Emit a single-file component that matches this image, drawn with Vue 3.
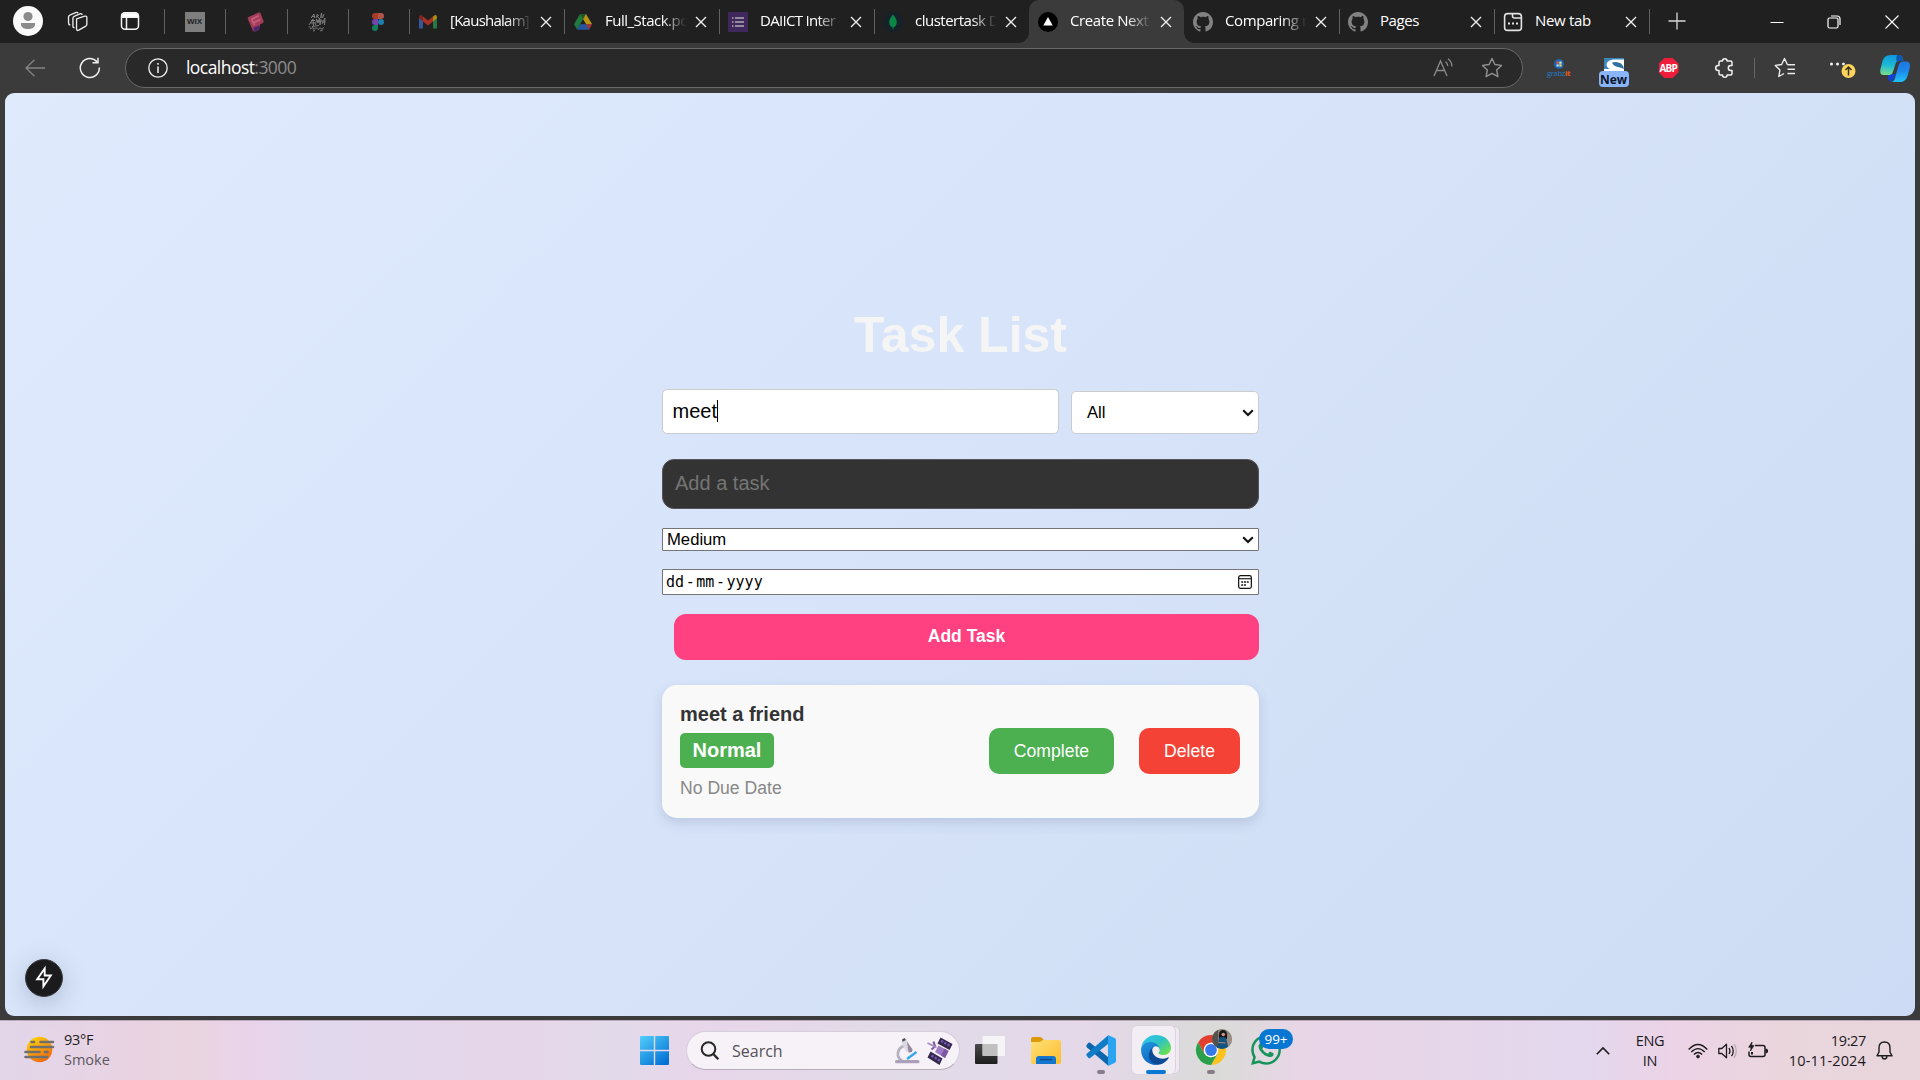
<script setup>
const pinned = ['wix', 'brand', 'ink', 'figma']
const tabs = [
  { icon: 'gmail', title: '[Kaushalam]' },
  { icon: 'drive', title: 'Full_Stack.pd' },
  { icon: 'forms', title: 'DAIICT Inter' },
  { icon: 'mongo', title: 'clustertask D' },
  { icon: 'next', title: 'Create Next', active: true },
  { icon: 'github', title: 'Comparing r' },
  { icon: 'github', title: 'Pages' },
  { icon: 'newtab', title: 'New tab' }
]
const tightness = {
  gmail: '-0.75px', drive: '-0.5px', forms: '-0.7px', mongo: '-0.5px',
  next: '-0.4px', github: '-0.4px', newtab: '-0.3px'
}
</script>

<template>
  <div class="screen">
    <header class="tabbar">
      <div class="cell c-user">
        <svg width="30" height="30" viewBox="0 0 30 30"><circle cx="15" cy="15" r="15" fill="#fafafa"/><circle cx="15" cy="10.5" r="4.6" fill="#8b8b8b"/><path d="M8 17h14v1.500c0 3-3.500 4.600-7 4.600s-7-1.600-7-4.600z" fill="#8b8b8b"/></svg>
      </div>
      <div class="cell c-work">
        <svg width="21" height="21" viewBox="0 0 22 22" fill="none" stroke="#ececec" stroke-width="1.400" stroke-linejoin="round"><path d="M10 8.200l8.500-2.800q2.300-.5 2.300 1.500v7q0 1.500-1.500 2.200l-7 4q-2 .9-2.300-1z"/><path d="M8 17.500q-2 0-1.800-2V7.500q.2-1.600 1.800-2.200L13.500 3q2-.7 2.500 1"/><path d="M3.500 14.800Q1.400 14 1.600 12V6.200Q1.800 4.600 3.500 4L9 1.700q2-.7 2.600.7"/></svg>
      </div>
      <div class="cell c-acts">
        <svg width="20" height="20" viewBox="0 0 20 20" fill="none" stroke="#f3f3f3" stroke-width="1.500"><rect x="1.500" y="1.800" width="17" height="16.500" rx="3.500"/><path d="M2 3.200q1-1 2.500-1h11q1.700 0 2.500 1v3H2z" fill="#fff"/><path d="M6.500 6v12"/></svg>
      </div>

      <div v-for="p in pinned" :key="p" class="pin">
        <div v-if="p === 'wix'" class="wix">WIX</div>
        <svg v-else-if="p === 'brand'" width="18" height="20" viewBox="0 0 18 20"><path d="M1.500 5L11.500.500q1.500-.5 2.200 1l2.800 7.500q.4 1.500-1 2.300L13 12.600l-1 4.900q-3.500 3-6 1.500L1 7.500Q.3 5.800 1.500 5z" fill="#a43c59"/><path d="M4.500 7.200l7.300-3.400M6.500 10.800l7-3.300M4.500 7.200l3 6" fill="none" stroke="#c4607e" stroke-width="1.800"/><path d="M6.500 15.500l6-2-.8 4q-3 2.500-5 1.200z" fill="#4b2476"/></svg>
        <svg v-else-if="p === 'ink'" width="20" height="20" viewBox="0 0 20 20" fill="none" stroke="#858585" stroke-width=".9"><path d="M4 6l3-4 .5 4M5 4.500h3M9 6l1.500-4M12 3l-2 1.500L12 6M13.500 6l1-5 .5 5M17 2l-1.500 4M2 13l4-6 .5 7M3.500 11H8M8.500 13l1-6 1.500 4 1.500-5 .5 7M14 7l-1 6M15 12l3-6-.5 7M15 10h3.500M3 17l3-1.500 1 2 2-2 2 2 2-1.500 2 1 2-1.500M4 8.500h4M10 9h6M5 14.500l7-1M6 19l2-.5M13 19l3-1M1.500 15h2"/></svg>
        <svg v-else width="14" height="20" viewBox="0 0 14 20"><path d="M4 1h3v6H4a3 3 0 010-6z" fill="#a73c27"/><path d="M7 1h3a3 3 0 010 6H7z" fill="#b05548"/><path d="M4 7h3v6H4a3 3 0 010-6z" fill="#7444ad"/><circle cx="10" cy="10" r="3" fill="#1c7fad"/><path d="M4 13h3v3a3 3 0 11-3-3z" fill="#12805b"/></svg>
      </div>

      <div v-for="(t, i) in tabs" :key="i" class="tab" :class="{ active: t.active, plain: i === 5 }">
        <span class="fav">
          <svg v-if="t.icon === 'gmail'" width="20" height="20" viewBox="0 0 20 20"><path d="M1 5v11.500h4V8z" fill="#34579c"/><path d="M19 5v11.500h-4V8z" fill="#267840"/><path d="M5 4.500l5 4 5-4v5L10 13.500 5 9.500z" fill="#a93228"/><path d="M1 6V5q.2-2.500 2.500-1.800L5 4.500v5z" fill="#7f2620"/><path d="M19 6V5q-.2-2.500-2.500-1.800L15 4.500v5z" fill="#b08b11"/></svg>
          <svg v-else-if="t.icon === 'drive'" width="20" height="20" viewBox="0 0 20 20"><path d="M7 2l3 5.200-6 10.300L1 12.200z" fill="#1f7a3d"/><path d="M7 2h6l6 10h-6z" fill="#b99414"/><path d="M4 17.800l3-5.600h12l-3 5.600z" fill="#28549b"/><path d="M13 12h6l-3 5.500z" fill="#a1352c"/><path d="M7 2h6l-3 5.200z" fill="#18582b"/></svg>
          <svg v-else-if="t.icon === 'forms'" width="20" height="20" viewBox="0 0 20 20"><rect width="20" height="20" rx="1" fill="#40285f"/><path d="M7 6h9M7 10h9M7 14h9M4 6h1.500M4 10h1.500M4 14h1.500" stroke="#918b9b" stroke-width="2"/></svg>
          <svg v-else-if="t.icon === 'mongo'" width="20" height="20" viewBox="0 0 20 20"><circle cx="10" cy="10" r="10" fill="#152229"/><path d="M10 2.500C7 6 6 8 6.300 11c.2 2 1.500 3.600 3.300 4.500l.2 2h.5l.2-2c1.800-1 3-2.500 3.200-4.500C14 8 13 6 10 2.500z" fill="#0c8645"/></svg>
          <svg v-else-if="t.icon === 'next'" width="20" height="20" viewBox="0 0 20 20"><circle cx="10" cy="10" r="10" fill="#000"/><path d="M10 5l4.700 8.500H5.300z" fill="#fff"/></svg>
          <svg v-else-if="t.icon === 'github'" width="20" height="20" viewBox="0 0 16 16"><path fill="#828282" d="M8 0C3.580 0 0 3.580 0 8c0 3.540 2.290 6.530 5.470 7.590.4.070.55-.17.55-.38 0-.19-.01-.82-.01-1.490-2.010.37-2.530-.49-2.690-.94-.09-.23-.48-.94-.82-1.130-.28-.15-.68-.52-.01-.53.63-.01 1.080.58 1.230.82.72 1.210 1.870.87 2.330.66.070-.52.28-.87.51-1.070-1.780-.2-3.640-.89-3.640-3.950 0-.87.31-1.590.82-2.150-.08-.2-.36-1.020.08-2.120 0 0 .67-.21 2.200.82.64-.18 1.320-.27 2-.27s1.360.09 2 .27c1.530-1.040 2.200-.82 2.200-.82.44 1.100.16 1.920.08 2.120.51.56.82 1.270.82 2.150 0 3.070-1.870 3.750-3.650 3.950.29.25.54.73.54 1.480 0 1.070-.01 1.930-.01 2.200 0 .21.15.46.55.38A8.010 8.010 0 0016 8c0-4.420-3.580-8-8-8z"/></svg>
          <svg v-else width="20" height="20" viewBox="0 0 20 20" fill="none" stroke="#e2e2e2" stroke-width="1.600"><rect x="1.600" y="1.600" width="16.800" height="16.800" rx="3"/><path d="M9.500 2v2q0 2 2 2h7"/><path d="M5 11.500h2m2 0h2m2 0h2" stroke-width="2"/></svg>
        </span>
        <span class="title" :class="{ fade: i < 6 }" :style="{ letterSpacing: tightness[t.icon] }">{{ t.title }}</span>
        <svg class="x" width="12" height="12" viewBox="0 0 12 12"><path d="M1 1l10 10M11 1L1 11" stroke="#eee" stroke-width="1.400"/></svg>
      </div>

      <div class="plus"><svg width="18" height="18" viewBox="0 0 18 18"><path d="M9 .5v17M.5 9h17" stroke="#d8d8d8" stroke-width="1.300"/></svg></div>
      <div class="wins">
        <svg width="14" height="14" viewBox="0 0 14 14"><path d="M.5 7.500h13" stroke="#fff"/></svg>
        <svg width="14" height="14" viewBox="0 0 14 14" fill="none" stroke="#fff" stroke-width="1.200"><rect x="1" y="3" width="10" height="10" rx="1.500"/><path d="M4 1h6q3 0 3 3v6"/></svg>
        <svg width="14" height="14" viewBox="0 0 14 14"><path d="M.5.500l13 13M13.500.500l-13 13" stroke="#fff" stroke-width="1.100"/></svg>
      </div>
    </header>

    <div class="toolbar">
      <svg class="back" width="20" height="18" viewBox="0 0 20 18" fill="none" stroke="#848484" stroke-width="1.300"><path d="M20 9H1M9.500.700L1 9l8.500 8.300"/></svg>
      <svg class="reload" width="22" height="22" viewBox="0 0 22 22" fill="none" stroke="#efefef" stroke-width="1.500"><path d="M20.300 10.500A9.500 9.500 0 1118 4.800M19 .8v5h-5.500"/></svg>
      <div class="address">
        <svg width="20" height="20" viewBox="0 0 20 20" fill="none" stroke="#f2f2f2" stroke-width="1.300"><circle cx="10" cy="10" r="9.200"/><path d="M10 8.500V15M10 5v1.700" stroke-width="1.500"/></svg>
        <span class="url">localhost<i>:3000</i></span>
        <svg class="read" width="20" height="20" viewBox="0 0 20 20" fill="none" stroke="#8b8b8b" stroke-width="1.300"><path d="M1 18L7.500 3 14 18M3.500 12.500h8M12.500 3.500q2 1.500 2.300 4.500M15 .800q4 3 4 7.800"/></svg>
        <svg class="fave" width="22" height="22" viewBox="0 0 22 22" fill="none" stroke="#929292" stroke-width="1.400" stroke-linejoin="round"><path d="M11 1.500l2.900 6 6.600.9-4.800 4.600 1.200 6.600-5.900-3.200-5.900 3.200L6.300 13 1.500 8.400l6.600-.9z"/></svg>
      </div>
      <div class="ext grabz">
        <svg width="10" height="10" viewBox="0 0 10 10"><circle cx="5" cy="5" r="5" fill="#1d65b5"/><path d="M2.500 2.500h2.300v2.300H2.500z" fill="#e9573d"/><path d="M5.300 2.500h2.300v2.300H5.300z" fill="#d4ecb0"/><path d="M2.500 5.300h2.300v2.300H2.500z" fill="#a9dcf8"/><path d="M5.300 5.300h2.300v2.300H5.300z" fill="#f6d35a"/></svg>
        <span>grabz<b>it</b></span>
      </div>
      <div class="ext scr">
        <svg width="20" height="14" viewBox="0 0 20 14"><rect width="20" height="14" rx=".5" fill="#fff"/><path d="M0 0h20v1.500H9Q3 2.500 2.500 6 2.500 9.500 6 11H0z" fill="#3c86b8"/><path d="M8 4.500q5-1.500 9 1 2.500 2 3 5.500l-4-1.500Q9 8.500 8 4.500z" fill="#2f719f"/></svg>
        <span>New</span>
      </div>
      <div class="ext abp"><span>ABP</span></div>
      <div class="ext">
        <svg class="puz" width="18" height="20" viewBox="0 0 18 20" fill="none" stroke="#f0f0f0" stroke-width="1.500" stroke-linejoin="round"><path d="M5.500 3h2a2.300 2.300 0 014.600 0h3.400q1.500 0 1.500 1.500v3h-1.200a2.500 2.500 0 000 5H17v3q0 1.500-1.500 1.500h-3.400a2.300 2.300 0 01-4.600 0h-2Q4 17 4 15.500v-3H3.200a2.500 2.500 0 010-5H4v-3Q4 3 5.500 3z"/></svg>
      </div>
      <div class="bar"></div>
      <div class="ext favs">
        <svg width="22" height="22" viewBox="0 0 22 22" fill="none" stroke="#ececec" stroke-width="1.400" stroke-linejoin="round"><path d="M13.500 7.700L10.500 1.500l-2.900 6-6.300.9 4.600 4.600-1.100 6.500 5.200-3M13.500 7.700h7.500M13.500 12.300h7.500M13.500 16.500h7.500"/></svg>
      </div>
      <div class="ext more">
        <svg width="28" height="26" viewBox="0 0 28 26"><g fill="#f2f2f2"><circle cx="3.500" cy="9" r="1.500"/><circle cx="9.500" cy="9" r="1.500"/><circle cx="15.500" cy="9" r="1.500"/></g><circle cx="20.500" cy="16" r="7.500" fill="#3b3b3b"/><circle cx="20.500" cy="16" r="7" fill="#fcd45c"/><path d="M20.500 20.500v-8M17.500 15l3-3 3 3" fill="none" stroke="#3b3319" stroke-width="1.500"/></svg>
      </div>
      <div class="ext cop">
        <svg width="30" height="27" viewBox="0 0 30 27">
          <defs>
            <linearGradient id="ca" x1=".3" y1="0" x2=".2" y2="1"><stop offset="0" stop-color="#0f9ade"/><stop offset=".5" stop-color="#1cb9d6"/><stop offset="1" stop-color="#7ce08a"/></linearGradient>
            <linearGradient id="cb" x1="0" y1="0" x2=".1" y2="1"><stop offset="0" stop-color="#1f74e0"/><stop offset=".5" stop-color="#1d86ea"/><stop offset="1" stop-color="#20c0f8"/></linearGradient>
          </defs>
          <path d="M8 19h8l-3 6.500q-1 1.500-2.500 1Q8.500 26 8 23z" fill="#1240d0"/>
          <path d="M10 0h9q2.500 0 3.500 3l.8 3h-4q-3 0-3.800 3l-2.600 8q-.9 3-4 3H3.500Q-.5 20 .4 14.500L2.500 6Q4.500 0 10 0z" fill="url(#ca)"/>
          <path d="M17 0h2q2.500 0 3.500 3l.8 3h-4q-1.600 0-2.600 1.200Q15.500 3 17 0z" fill="#0d56b4"/>
          <path d="M23.500 6.500h3q4.500.5 3.300 6L27.500 21q-2 6-7.500 6h-9q3 0 4-4l3.500-12.500q1.200-4 5-4z" fill="url(#cb)"/>
        </svg>
      </div>
    </div>

    <main class="viewport">
      <div class="page">
        <h1>Task List</h1>
        <div class="filters">
          <div class="search-in">meet<span class="caret"></span></div>
          <div class="filter-sel"><span>All</span><svg class="chev" width="12" height="8" viewBox="0 0 12 8"><path d="M1.200 1.200L6 6l4.800-4.800" fill="none" stroke="#111" stroke-width="2.100"/></svg></div>
        </div>
        <div class="task-in">Add a task</div>
        <div class="prio"><span>Medium</span><svg class="chev" width="12" height="8" viewBox="0 0 12 8"><path d="M1.200 1.200L6 6l4.800-4.800" fill="none" stroke="#111" stroke-width="2.100"/></svg></div>
        <div class="date"><span>dd<i>-</i>mm<i>-</i>yyyy</span>
          <svg width="14" height="14" viewBox="0 0 15 15"><rect x=".7" y=".7" width="13.600" height="13.600" rx="2" fill="none" stroke="#111" stroke-width="1.300"/><path d="M1 4h13" stroke="#111" stroke-width="1.200"/><path d="M3.500 7.500h2m1 0h2m1 0h2M3.500 10.800h2m1 0h2" stroke="#111" stroke-width="1.700"/></svg>
        </div>
        <div class="add">Add Task</div>
        <section class="card">
          <div class="info">
            <strong>meet a friend</strong>
            <span class="badge">Normal</span>
            <span class="due">No Due Date</span>
          </div>
          <div class="acts">
            <div class="btn done">Complete</div>
            <div class="btn del">Delete</div>
          </div>
        </section>
      </div>
      <div class="bolt">
        <svg width="16" height="21" viewBox="0 0 16 21"><path d="M8.700 1.500L1.200 12.300h6.200v7.200L14.800 8.500H8.700z" fill="none" stroke="#fff" stroke-width="1.900"/></svg>
      </div>
    </main>

    <footer class="taskbar">
      <div class="weather">
        <svg width="30" height="27" viewBox="0 0 30 27"><defs><linearGradient id="sun" x1=".2" y1="0" x2=".8" y2="1"><stop offset="0" stop-color="#fdd30a"/><stop offset="1" stop-color="#f0620f"/></linearGradient></defs><circle cx="15.500" cy="13.500" r="12.800" fill="url(#sun)"/><g stroke="#6f6f70" stroke-width="2.600" stroke-linecap="round"><path d="M7.500 6h2.500M16.500 6H29M7 11H29M1.500 16h14M21 16h2.500M1.500 21H23"/></g></svg>
        <div class="wtxt"><span>93°F</span><span class="dim">Smoke</span></div>
      </div>
      <div class="center">
        <svg class="start" width="29" height="29" viewBox="0 0 29 29"><defs><linearGradient id="wf" gradientUnits="userSpaceOnUse" x1="0" y1="0" x2="22" y2="29"><stop offset="0" stop-color="#52cffc"/><stop offset="1" stop-color="#0472d3"/></linearGradient></defs><path d="M1 0h12.800v13.800H0V1q0-1 1-1zM15.200 0H28q1 0 1 1v12.800H15.200zM0 15.200h13.800V29H1q-1 0-1-1zM15.200 15.200H29V28q0 1-1 1H15.200z" fill="url(#wf)"/></svg>
        <div class="search">
          <svg width="20" height="20" viewBox="0 0 20 20" fill="none" stroke="#282828" stroke-width="2"><circle cx="8.500" cy="8" r="6.800"/><path d="M13.300 13l5 5.300" stroke-width="2.400"/></svg>
          <span>Search</span>
          <svg class="mic" width="25" height="26" viewBox="0 0 25 26"><path d="M8.500 8Q2 11 3 17.500q.8 4 4.500 5.500" fill="none" stroke="#b6b1c0" stroke-width="2.800"/><path d="M6.500 4l5-2.500 4.800 10-5 2.500z" fill="#dcd8e2"/><path d="M12 3.500l5.500 8-.5 2.500-3.500.500z" fill="#98869f"/><path d="M7 1.500L9.500 0l1.500 2-3.500 1.800z" fill="#4f4a56"/><path d="M12 21l9.500-7" stroke="#35a5ee" stroke-width="2.300"/><rect y="22" width="24.500" height="3.200" rx="1.500" fill="#aaa0b9"/></svg>
          <svg class="sat" width="26" height="28" viewBox="0 0 26 28"><path d="M13.500.500L25.500 7l-3 6-12-6.500zM3.500 14.500l12 7-3 6.500L.5 20.500z" fill="#34284a"/><path d="M14 3.800l9 5M4.500 18.500l8.500 5.200" stroke="#7355b8" stroke-width="2.400" stroke-dasharray="2.400 1.300"/><path d="M11.500 8.500l10 5.500-3.500 7-10-6z" fill="#a07cc6"/><path d="M17.500 11.500l4 2.500-3.500 7-4-2.400z" fill="#7c57a6"/><path d="M6.500 4.500l1.500 5-3.500 3" fill="none" stroke="#7d5e9e" stroke-width="2.200"/><path d="M.5 6l9 4.500" stroke="#a88bc4" stroke-width="1.800"/></svg>
        </div>
        <svg class="tv" width="30" height="28" viewBox="0 0 30 28"><defs><linearGradient id="tg" x1="0" y1="0" x2="0" y2="1"><stop offset="0" stop-color="#4a4a4a"/><stop offset="1" stop-color="#1d1d1d"/></linearGradient></defs><rect y="8" width="22.500" height="20" rx="1" fill="url(#tg)"/><rect x="7.500" width="22.500" height="20" rx="1" fill="#f8f8f8" opacity=".85"/><path d="M7.500 8h15v12h-15z" fill="#b9b9b9" opacity=".8"/></svg>
        <svg class="folder" width="30" height="27" viewBox="0 0 30 27"><defs><linearGradient id="fg" x1="0" y1="0" x2="1" y2="1"><stop offset="0" stop-color="#ffe078"/><stop offset="1" stop-color="#fdbd2b"/></linearGradient></defs><path d="M0 2q0-2 2-2h7q1 0 2 1l2 2-2 3H0z" fill="#dc9a08"/><path d="M0 5h9l3-2h16q2 0 2 2v20q0 2-2 2H2q-2 0-2-2z" fill="url(#fg)"/><path d="M5 27v-5q0-3 3-3h14q3 0 3 3v5z" fill="#1576cc"/><path d="M9 22.500h12" stroke="#0b4d96" stroke-width="1.500"/></svg>
        <div class="app vs">
          <svg width="30" height="31" viewBox="0 0 30 31"><path d="M.5 10l2-2.300q.8-.5 1.700 0L22 22v8.500L1 12.500Q0 11 .5 10z" fill="#0b66ad"/><path d="M.5 20.500l2 2.500q.8.500 1.700 0L22 9V.500L1 18.500Q0 19.500.5 20.500z" fill="#0f7cc8"/><path d="M22 0l6.500 3Q30 3.700 30 5v21q0 1.300-1.500 2L22 31z" fill="#2aa4f0"/></svg>
          <i></i>
        </div>
        <div class="app edge">
          <svg width="30" height="30" viewBox="0 0 256 256"><defs><linearGradient id="e1" x1=".1" y1="0" x2="1" y2=".8"><stop offset="0" stop-color="#35c1f1"/><stop offset=".5" stop-color="#2cc3c7"/><stop offset="1" stop-color="#6be248"/></linearGradient><linearGradient id="e2" x1="0" y1="0" x2=".5" y2="1"><stop offset="0" stop-color="#219be3"/><stop offset="1" stop-color="#0c64bd"/></linearGradient></defs><path d="M231 190.500c-3.400 1.800-6.900 3.400-10.500 4.700a101.500 101.500 0 0 1-35.900 6.500c-47.200 0-88.400-32.500-88.400-74.300 0-11.400 6.400-21.900 16.400-27.300-42.800 1.800-53.800 46.400-53.800 72.500 0 74 68.100 81.400 82.800 81.400 7.900 0 19.800-2.300 27-4.600l1.300-.4a128.400 128.400 0 0 0 66.600-52.800 4 4 0 0 0-5.500-5.700z" fill="#0c4a94"/><path d="M105.700 241.400A79.200 79.200 0 0 1 83 220.100a80.700 80.700 0 0 1 29.500-120c3.200-1.500 8.500-4.100 15.600-4a32.400 32.400 0 0 1 25.700 13 31.900 31.900 0 0 1 6.300 18.700c0-.2 24.500-79.600-80-79.600-43.900 0-80 41.700-80 78.200a130.200 130.200 0 0 0 12.100 56 128 128 0 0 0 156.400 67.100 75.500 75.500 0 0 1-62.800-8z" fill="url(#e2)"/><path d="M152.300 148.900c-.9 1-3.400 2.500-3.400 5.600 0 2.600 1.700 5.200 4.800 7.300 14.300 10 41.400 8.600 41.500 8.600a59.600 59.600 0 0 0 30.300-8.300 61.400 61.400 0 0 0 30.400-52.900c.3-22.400-8-37.300-11.300-43.900C223.500 23.900 177.700 0 128 0A128 128 0 0 0 0 126.200c.5-36.500 36.800-66 80-66 3.500 0 23.500.3 42 10.100 16.300 8.500 24.900 18.800 30.800 29.200 6.200 10.700 7.300 24.200 7.300 29.500 0 5.400-2.700 13.400-7.800 20z" fill="url(#e1)"/></svg>
          <i></i>
        </div>
        <div class="app chrome">
          <svg width="30" height="30" viewBox="0 0 30 30"><path d="M15 7.500h13A15 15 0 0115 30l6.500-11.200z" fill="#fcc31e"/><path d="M2 7.500L8.500 18.700 15 7.500h13A15 15 0 002 7.500z" fill="#e2402f"/><path d="M2 7.500l6.500 11.200L15 22.500l6.500-3.700L15 30A15 15 0 012 7.500z" fill="#2aa04b"/><circle cx="15" cy="15" r="7.300" fill="#fff"/><circle cx="15" cy="15" r="5.900" fill="#3579ea"/></svg>
          <svg class="face" width="20" height="20" viewBox="0 0 20 20"><defs><clipPath id="fc"><circle cx="10" cy="10" r="10"/></clipPath></defs><g clip-path="url(#fc)"><rect width="20" height="20" fill="#8b8078"/><path d="M0 0h6v20H0z" fill="#56514f"/><path d="M14 4l6 3v9l-5 4z" fill="#9a8e84"/><path d="M7 10q-1-9 4-9t4 9z" fill="#171519"/><circle cx="11.300" cy="5.500" r="1.800" fill="#c69680"/><path d="M7 9q4-2 7 0l1.500 6 1 5H4l2-5z" fill="#14527f"/><path d="M6.500 13.500l7 .5" stroke="#b88872" stroke-width="1.200"/></g></svg>
          <i></i>
        </div>
        <div class="app wa">
          <svg width="30" height="30" viewBox="0 0 24 24"><path fill="#17945c" d="M17.472 14.382c-.297-.149-1.758-.867-2.030-.967-.273-.099-.471-.148-.67.150-.197.297-.767.966-.940 1.164-.173.199-.347.223-.644.075-.297-.150-1.255-.463-2.390-1.475-.883-.788-1.480-1.761-1.653-2.059-.173-.297-.018-.458.130-.606.134-.133.298-.347.446-.520.149-.174.198-.298.298-.497.099-.198.050-.371-.025-.520-.075-.149-.669-1.612-.916-2.207-.242-.579-.487-.500-.669-.510-.173-.008-.371-.010-.570-.010-.198 0-.520.074-.792.372-.272.297-1.040 1.016-1.040 2.479 0 1.462 1.065 2.875 1.213 3.074.149.198 2.096 3.200 5.077 4.487.709.306 1.262.489 1.694.625.712.227 1.360.195 1.871.118.571-.085 1.758-.719 2.006-1.413.248-.694.248-1.289.173-1.413-.074-.124-.272-.198-.570-.347m-5.421 7.403h-.004a9.870 9.870 0 01-5.031-1.378l-.361-.214-3.741.982.998-3.648-.235-.374a9.860 9.860 0 01-1.510-5.260c.001-5.450 4.436-9.884 9.888-9.884 2.640 0 5.122 1.030 6.988 2.898a9.825 9.825 0 012.893 6.994c-.003 5.450-4.437 9.884-9.885 9.884m8.413-18.297A11.815 11.815 0 0012.050 0C5.495 0 .160 5.335.157 11.892c0 2.096.547 4.142 1.588 5.945L.057 24l6.305-1.654a11.882 11.882 0 005.683 1.448h.005c6.554 0 11.890-5.335 11.893-11.893a11.821 11.821 0 00-3.480-8.413Z"/></svg>
          <span class="count">99+</span>
        </div>
      </div>
      <div class="tray">
        <svg class="up" width="14" height="8" viewBox="0 0 14 8"><path d="M.8 7.200L7 1l6.200 6.200" fill="none" stroke="#1c1c1c" stroke-width="1.600"/></svg>
        <div class="lang"><span>ENG</span><span>IN</span></div>
        <svg class="wifi" width="20" height="16" viewBox="0 0 20 16" fill="none" stroke="#1c1c1c" stroke-width="1.400"><path d="M.7 6.500q9.300-10 18.600 0M3.300 9.100q6.700-7 13.400 0M5.900 11.600q4.100-4.200 8.200 0"/><circle cx="10" cy="13.500" r="1.500" fill="#1c1c1c" stroke-width=".6"/></svg>
        <svg class="vol" width="20" height="16" viewBox="0 0 20 16" fill="none" stroke="#1c1c1c" stroke-width="1.300" stroke-linejoin="round"><path d="M.8 5.500h3L8.500 1.200v13.600L3.800 10.500h-3zM11 5q2 3 0 6M13.500 2.800q3.500 5.200 0 10.400"/><path d="M16 1q4.500 7 0 14" stroke="#b7a9af"/></svg>
        <svg class="bat" width="20" height="17" viewBox="0 0 20 17" fill="none" stroke="#1c1c1c" stroke-width="1.500"><path d="M7 3.500h8q2 0 2 2v7q0 2-2 2H3q-2 0-2-2v-3"/><path d="M18 7q1.600 0 1.600 2T18 11z" fill="#1c1c1c" stroke-width="1"/><path d="M4 0L.7 5.300h2.400L2.500 9 6 3.600H3.700z" fill="#1c1c1c" stroke-width=".7"/><path d="M4 10v2.500" stroke-width="2"/></svg>
        <div class="clock"><span>19:27</span><span class="day">10-11-2024</span></div>
        <svg class="bell" width="17" height="19" viewBox="0 0 17 19" fill="none" stroke="#1c1c1c" stroke-width="1.400" stroke-linejoin="round"><path d="M8.500 1q5.500 0 5.500 6v4l2 3.800H1L3 11V7q0-6 5.500-6zM6 15.500q.5 2.500 2.500 2.500t2.500-2.500"/></svg>
      </div>
    </footer>
  </div>
</template>

<style>
body { margin: 0; overflow: hidden; background: #3b3b3b; }
</style>

<style scoped>
* { box-sizing: border-box; }
svg { display: block; flex: none; overflow: visible; }
.screen { width: 1920px; height: 1080px; display: flex; flex-direction: column; background: #3b3b3b; font-family: "Open Sans", "Noto Sans", sans-serif; overflow: hidden; }

/* tab strip */
.tabbar { height: 43px; background: #202020; display: flex; flex: none; }
.cell { height: 42px; display: flex; align-items: center; justify-content: center; flex: none; }
.c-user { width: 56px; }
.c-work { width: 43px; }
.c-acts { width: 61px; margin-right: 4px; }
.pin, .tab { position: relative; height: 43px; display: flex; align-items: center; flex: none; }
.pin::before, .tab::before { content: ""; position: absolute; left: 0; top: 9px; width: 1px; height: 25px; background: #616161; }
.pin { width: 61.25px; justify-content: center; padding-top: 1px; }
.wix { width: 20px; height: 20px; background: #7e7e7e; color: #222; font: bold 8px/20px "Liberation Sans", sans-serif; text-align: center; }
.tab { width: 155px; padding-left: 9px; }
.tab.active { background: #3b3b3b; border-radius: 10px 10px 0 0; }
.tab.active::before, .tab.plain::before { width: 10px; height: 10px; top: 33px; }
.tab.active::before { left: -10px; background: radial-gradient(circle at 0 0, transparent 9.5px, #3b3b3b 10px); }
.tab.plain::before { background: radial-gradient(circle at 100% 0, transparent 9.5px, #3b3b3b 10px); }
.fav { width: 20px; height: 20px; margin-top: 1px; flex: none; }
.title { width: 86px; height: 24px; margin: -3px 0 0 12px; white-space: pre; font-size: 15px; line-height: 24px; color: #fff; }
.title.fade { -webkit-mask-image: linear-gradient(90deg, #000 66%, transparent 95%); mask-image: linear-gradient(90deg, #000 66%, transparent 95%); }
.x { margin: 1px 0 0 4px; }
.plus { width: 56px; display: flex; align-items: center; justify-content: center; position: relative; height: 42px; }
.plus::before { content: ""; position: absolute; left: 0; top: 9px; width: 1px; height: 25px; background: #616161; }
.wins { display: flex; gap: 43.500px; align-items: center; height: 43px; margin-left: 64.500px; }

/* toolbar */
.toolbar { height: 50px; display: flex; align-items: center; flex: none; }
.back { margin: -1px 0 0 25px; }
.reload { margin: -1px 0 0 34px; }
.address { margin: 0 0 0 24px; width: 1398px; height: 40px; border: 1px solid #686868; border-radius: 20px; background: #292929; display: flex; align-items: center; padding-left: 21.500px; flex: none; }
.url { font-size: 17.500px; letter-spacing: -0.55px; color: #fff; margin: -2px 0 0 18.500px; width: 1247px; }
.url i { font-style: normal; color: #8c8c8c; }
.read { margin-right: 28px; }
.ext { width: 55px; height: 46px; display: flex; flex-direction: column; align-items: center; justify-content: center; flex: none; }
.grabz { margin-left: 8px; }
.grabz span { font: 600 7.500px/8px "Open Sans", sans-serif; color: #2a6ea8; margin-top: 0; letter-spacing: -0.4px; }
.grabz b { color: #d95621; }
.scr { justify-content: flex-start; padding-top: 13px; }
.scr span { margin-top: -1px; width: 30px; height: 16px; border-radius: 4px; background: #8ab4f8; color: #0c1526; font: bold 12px/17px "Open Sans", sans-serif; text-align: center; }
.abp span { width: 20px; height: 20px; background: #ef1d3c; color: #fff; font: bold 10px/20px "Open Sans", sans-serif; letter-spacing: -0.8px; text-indent: -0.5px; text-align: center; clip-path: polygon(29% 0, 71% 0, 100% 29%, 100% 71%, 71% 100%, 29% 100%, 0 71%, 0 29%); }
.bar { width: 1px; height: 20px; background: #666; margin-left: 3px; }
.favs { width: 60px; }
.more { width: 54px; }
.cop { width: 51px; }

/* web page */
.viewport { position: relative; margin: 0 5px; height: 923px; border-radius: 9px; background: linear-gradient(135deg, #dfeafd, #cddcf4); display: flex; justify-content: center; flex: none; font-family: "Liberation Sans", Arial, sans-serif; }
.page { width: 597px; padding-top: 212px; margin-left: 1px; }
h1 { margin: 0; font-size: 50px; line-height: 60px; color: #f5f5f5; text-align: center; font-weight: bold; }
.filters { display: flex; justify-content: space-between; align-items: flex-end; margin-top: 24px; }
.search-in { width: 397px; height: 45px; border: 1px solid #ccc; border-radius: 5px; background: #fff; display: flex; align-items: center; padding: 0 0 0 9.500px; font-size: 20px; color: #000; }
.caret { width: 1px; height: 22px; background: #000; margin-top: -1px; }
.filter-sel { width: 188px; height: 43px; border: 1px solid #ccc; border-radius: 5px; background: #fff; display: flex; align-items: center; justify-content: space-between; padding: 0 4px 0 15px; font-size: 16.670px; }
.chev { margin-top: 1px; }
.task-in { margin-top: 25px; height: 50px; border: 1px solid #555; border-radius: 12px; background: #333; color: #757575; font-size: 20px; line-height: 46px; padding-left: 12px; }
.prio { margin-top: 19px; height: 23px; border: 1px solid #767676; border-radius: 1px; background: #fff; display: flex; align-items: center; justify-content: space-between; padding: 0 4px; font-size: 16.670px; }
.date { margin-top: 18px; height: 26px; border: 1px solid #767676; border-radius: 1px; background: #fff; display: flex; align-items: center; justify-content: space-between; padding: 0 6px 0 3px; font: 15px "DejaVu Sans Mono", monospace; }
.date i { font-style: normal; margin: 0 1.600px; }
.add { margin: 19px 0 0 12px; height: 46px; border-radius: 12px; background: #ff4081; color: #fff; font-weight: bold; font-size: 17.500px; line-height: 45px; text-align: center; }
.card { margin-top: 25px; height: 133px; border-radius: 15px; background: #f9f9f9; box-shadow: 0 5px 12px rgba(60, 80, 120, .17); display: flex; justify-content: space-between; padding: 18px 19px 0 18px; }
.info { display: flex; flex-direction: column; align-items: flex-start; }
.info strong { font-size: 20px; line-height: 23px; color: #333; }
.badge { margin-top: 7px; height: 35px; padding: 0 12.500px; border-radius: 5px; background: #4caf50; color: #fff; font-weight: bold; font-size: 20px; line-height: 34px; }
.due { margin-top: 10px; font-size: 17.600px; line-height: 20px; color: #888; }
.acts { display: flex; gap: 25px; margin-top: 25px; }
.btn { height: 46px; border-radius: 10px; color: #fff; font-size: 17.600px; line-height: 47px; text-align: center; }
.done { width: 125px; background: #4caf50; }
.del { width: 101px; background: #f44336; }
.bolt { position: absolute; left: 20px; bottom: 19.500px; width: 38px; height: 38px; border-radius: 50%; background: #1b1b1d; border: 1px solid #3f4044; display: flex; align-items: center; justify-content: center; box-shadow: 0 6px 24px rgba(50, 70, 110, .26); }

/* taskbar */
.taskbar { margin-top: 4px; height: 60px; display: flex; border-top: 1px solid #b9aab9; background: linear-gradient(90deg, #e2d6e9 0, #e9d3e3 130px, #e9d4df 190px, #ead3ea 250px, #e1d8ed 320px, #e6d6e9 500px, #e2daea 620px, #e8d6ea 700px, #e1dbe7 900px, #e4d8e9 1090px, #dadbd8 1220px, #e8d6e7 1300px, #e7d6e8 1400px, #e3d8ee 1580px, #ecd3e7 1670px, #ead5dd 1780px, #e8d6dc 1920px); }
.weather { display: flex; width: 640px; padding-left: 24px; flex: none; }
.weather > svg { margin-top: 15px; }
.wtxt { display: flex; flex-direction: column; margin: 9px 0 0 10px; font-size: 14.500px; line-height: 20px; letter-spacing: -0.3px; color: #1f1b20; }
.wtxt .dim { color: #5d575e; letter-spacing: 0; }
.center { display: flex; width: 953px; flex: none; }
.start { margin-top: 15px; }
.search { width: 274px; height: 39px; margin: 10px 0 0 17px; border-radius: 20px; background: #f6f2f8; border: 1px solid #d7cedb; border-bottom-color: #b7adbb; display: flex; align-items: center; padding-left: 13px; flex: none; }
.search span { font-size: 16px; color: #555157; margin: 0 0 0 12px; width: 163px; letter-spacing: 0; }
.sat { margin-left: 7px; }
.tv { margin: 15px 0 0 15px; }
.folder { margin: 16px 0 0 26px; }
.app { position: relative; height: 48px; margin-top: 5px; flex: none; }
.app > svg:first-child { margin-top: 9px; }
.app i { position: absolute; left: 50%; bottom: 0; width: 8px; height: 4px; margin-left: -4px; border-radius: 2px; background: #857d88; }
.vs { margin-left: 25px; width: 30px; }
.edge { margin-left: 16px; width: 43px; padding-left: 9px; background: #f2eef4; border-radius: 5px; box-shadow: 0 0 0 1px #dcd5df, 5px 0 0 -1px #efeaf1, 5px 0 0 0 #d5cdd8; }
.edge i { width: 20px; margin-left: -8px; left: 22px; background: #0878d4; }
.chrome { margin-left: 21px; width: 30px; }
.face { position: absolute; left: 16px; top: 3px; }
.wa { margin-left: 25px; width: 42px; }
.count { position: absolute; left: 8px; top: 3px; width: 34px; height: 20px; border-radius: 10px; background: #0877d3; color: #fff; font-size: 13.500px; line-height: 20px; text-align: center; }
.tray { display: flex; align-items: center; height: 59px; }
.up { margin-left: 3px; }
.tray span { font-size: 14.500px; line-height: 20px; letter-spacing: -0.35px; color: #1c1a1e; }
.lang { width: 40px; margin-left: 20px; display: flex; flex-direction: column; align-items: center; }
.wifi { margin-left: 18px; }
.vol { margin-left: 10px; }
.bat { margin-left: 10px; }
.clock { width: 98px; display: flex; flex-direction: column; align-items: flex-end; }
.tray .day { letter-spacing: 0.15px; }
.bell { margin-left: 10px; }
</style>
